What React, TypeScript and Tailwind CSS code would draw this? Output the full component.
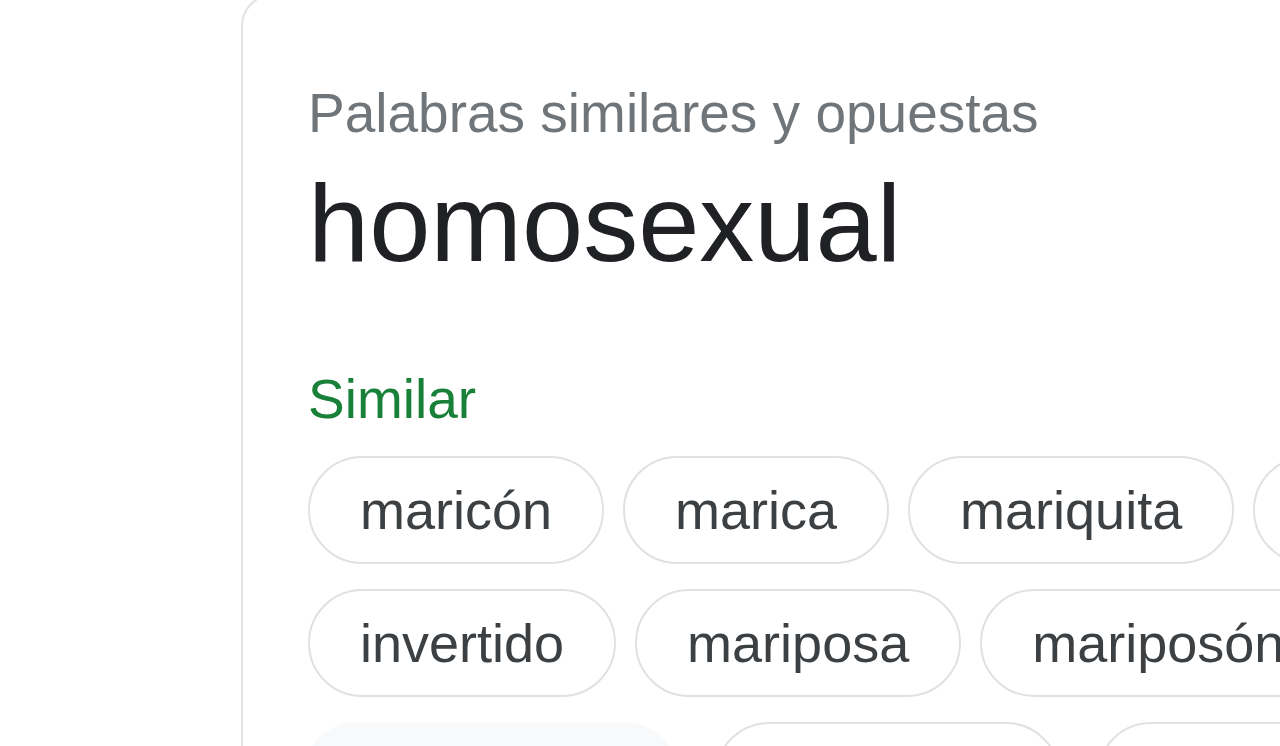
const rows: { label: string }[][] = [
  [{ label: "maricón" }, { label: "marica" }, { label: "mariquita" }, { label: "sodomita" }],
  [{ label: "invertido" }, { label: "mariposa" }, { label: "mariposón" }],
];

function Chip({ label }: { label: string }) {
  return (
    <div className="shrink-0 h-[108px] flex items-center px-[50px] rounded-full border-2 border-[#dfe1e5] text-[54px] leading-none text-[#3c4043] whitespace-nowrap">
      {label}
    </div>
  );
}

export default function App() {
  return (
    <div
      className="w-[1280px] h-[746px] overflow-hidden bg-white"
      style={{ fontFamily: '"Liberation Sans", Arial, sans-serif' }}
    >
      <div className="ml-[241px] -mt-[6px] w-[1300px] h-[900px] rounded-[32px] border-2 border-[#e1e3e6] bg-white pl-[65px] pt-[90px]">
        {/* heading */}
        <div className="text-[55px] leading-none text-[#70757a] whitespace-nowrap">
          Palabras similares y opuestas
        </div>
        <div className="mt-[27px] text-[110px] leading-none text-[#202124] whitespace-nowrap">
          homosexual
        </div>

        <div className="mt-[94px] text-[55px] leading-none text-[#188038]">Similar</div>

        <div className="mt-[29px] flex flex-col gap-[25px]">
          {rows.map((row, i) => (
            <div key={i} className="flex gap-[19px]">
              {row.map((c) => (
                <Chip key={c.label} label={c.label} />
              ))}
            </div>
          ))}
          <div className="flex gap-[37px] -ml-[5px]">
            <div className="shrink-0 w-[375px] h-[108px] rounded-[54px] bg-[#f8f9fa]" />
            <div className="shrink-0 w-[345px] h-[108px] flex items-center justify-center rounded-full border-2 border-[#dfe1e5] text-[54px] leading-none text-[#3c4043]">
              gay
            </div>
            <div className="shrink-0 w-[345px] h-[108px] flex items-center justify-center rounded-full border-2 border-[#dfe1e5] text-[54px] leading-none text-[#3c4043]">
              lesbiana
            </div>
          </div>
        </div>
      </div>
    </div>
  );
}
